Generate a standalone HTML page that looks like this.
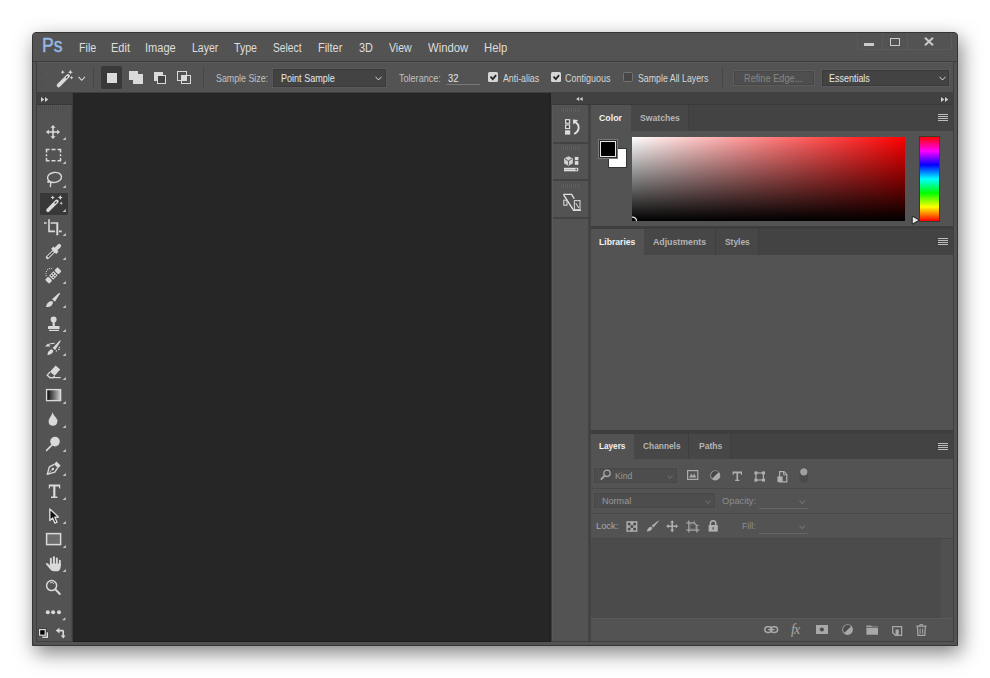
<!DOCTYPE html>
<html><head><meta charset="utf-8">
<style>
*{margin:0;padding:0;box-sizing:border-box}
html,body{width:990px;height:678px;overflow:hidden;background:#fff}
body{position:relative;font-family:"Liberation Sans",sans-serif}
.a{position:absolute}
.t{position:absolute;white-space:nowrap;line-height:1;transform-origin:0 0}
svg.i{position:absolute;overflow:visible}
.ic{fill:#d9d9d9}
.st{fill:none;stroke:#d9d9d9}
</style></head><body>
<div class="a" style="left:32px;top:32px;width:926px;height:614px;background:#535353;border:1px solid #353535;border-radius:4px 4px 0 0;box-shadow:3px 7px 20px rgba(0,0,0,.5)"></div>

<!-- menu bar -->
<div class="a" style="left:33px;top:33px;width:924px;height:28px;background:#535353"></div>
<div class="a" style="left:33px;top:61px;width:924px;height:1px;background:#3d3d3d"></div>
<div class="t" style="left:42.2px;top:35.6px;font-size:19.5px;font-weight:normal;color:#95b8e6;-webkit-text-stroke:0.45px #95b8e6;transform:scaleX(.9)">Ps</div>
<!-- window buttons -->
<div class="a" style="left:857px;top:33px;width:95px;height:17px;border:1px solid #5a5a5a;border-top:none;border-radius:0 0 3px 3px"></div>
<div class="a" style="left:882px;top:33px;width:1px;height:16px;background:#5a5a5a"></div>
<div class="a" style="left:907px;top:33px;width:1px;height:16px;background:#5a5a5a"></div>
<div class="a" style="left:864px;top:43.2px;width:10px;height:2.6px;background:#cacaca"></div>
<div class="a" style="left:890px;top:38.2px;width:10px;height:7.8px;border:1.6px solid #cacaca"></div>
<svg class="i" style="left:924px;top:37px" width="10" height="9"><path d="M1 0.8L9 8.2M9 0.8L1 8.2" stroke="#cacaca" stroke-width="2"/></svg>

<!-- options bar -->
<div class="a" style="left:37px;top:62px;width:916px;height:31px;background:#535353;border-top:1px solid #5b5b5b;border-bottom:1px solid #3f3f3f"></div>
<!-- grip -->
<div class="a" style="left:40px;top:68px;width:3px;height:19px;background:repeating-linear-gradient(#4d4d4d 0 1px,#575757 1px 2px)"></div>
<!-- wand -->
<svg class="i" style="left:56px;top:70px" width="18" height="18"><path d="M2.6 15.4L12 6" stroke="#d9d9d9" stroke-width="3.8" stroke-linecap="round"/><path d="M10.2 7.8L11.4 6.6" stroke="#444" stroke-width="1.2" stroke-linecap="round"/><path fill="#d9d9d9" d="M6.7 0.10000000000000009L7.37 1.53L8.8 2.2L7.37 2.87L6.7 4.300000000000001L6.03 2.87L4.6 2.2L6.03 1.53Z"/><path fill="#d9d9d9" d="M14.4 -0.19999999999999973L15.17 1.43L16.8 2.2L15.17 2.97L14.4 4.6L13.63 2.97L12.0 2.2L13.63 1.43Z"/><path fill="#d9d9d9" d="M15.6 5.9L16.18 7.12L17.4 7.7L16.18 8.28L15.6 9.5L15.02 8.28L13.799999999999999 7.7L15.02 7.12Z"/></svg>
<svg class="i" style="left:78px;top:76px" width="8" height="6"><path d="M0.5 0.8L3.7 4.3L6.9 0.8" class="st" stroke-width="1.1"/></svg>
<div class="a" style="left:93px;top:67px;width:1px;height:21px;background:#474747"></div>
<!-- selection mode buttons -->
<div class="a" style="left:101px;top:66px;width:21px;height:23px;background:#393939;border-radius:2px"></div>
<div class="a" style="left:107px;top:73px;width:10px;height:10px;background:#dadada"></div>
<div class="a" style="left:129px;top:71px;width:9px;height:9px;background:#dadada"></div>
<div class="a" style="left:133px;top:74px;width:9.5px;height:9.5px;background:#dadada"></div>
<div class="a" style="left:154px;top:71.5px;width:9px;height:9px;background:#dadada"></div>
<div class="a" style="left:157px;top:74.5px;width:9px;height:9px;background:#444;border:1.5px solid #dadada"></div>
<div class="a" style="left:177px;top:71px;width:9.5px;height:9.5px;border:1.5px solid #dadada"></div>
<div class="a" style="left:181px;top:74.5px;width:9.5px;height:9.5px;border:1.5px solid #dadada"></div>
<div class="a" style="left:181.5px;top:75px;width:4.5px;height:5px;background:#dadada"></div>
<div class="a" style="left:203px;top:67px;width:1px;height:21px;background:#474747"></div>
<!-- sample size dropdown -->
<div class="a" style="left:273px;top:69px;width:113px;height:18px;background:#434343;border:1px solid #3a3a3a;box-shadow:0 0 0 1px #5a5a5a"></div>
<svg class="i" style="left:375px;top:76px" width="8" height="6"><path d="M0.5 0.8L3.5 4L6.5 0.8" class="st" stroke-width="1"/></svg>
<!-- tolerance underline -->
<div class="a" style="left:446px;top:84px;width:34px;height:1px;background:#787878"></div>
<!-- checkboxes -->
<div class="a" style="left:487.6px;top:72px;width:10.3px;height:10.2px;background:#d6d6d6;border-radius:1.5px"></div>
<svg class="i" style="left:487.6px;top:72px" width="11" height="11"><path d="M2.5 4.7L4.8 7.1L8.1 3.2" fill="none" stroke="#262626" stroke-width="1.8"/></svg>
<div class="a" style="left:550.8px;top:72px;width:10.3px;height:10.2px;background:#d6d6d6;border-radius:1.5px"></div>
<svg class="i" style="left:550.8px;top:72px" width="11" height="11"><path d="M2.5 4.7L4.8 7.1L8.1 3.2" fill="none" stroke="#262626" stroke-width="1.8"/></svg>
<div class="a" style="left:622.8px;top:72px;width:10.2px;height:10.1px;border:1px solid #727272;border-radius:1.5px;background:#464646"></div>
<div class="a" style="left:722px;top:67px;width:1px;height:21px;background:#474747"></div>
<!-- refine edge -->
<div class="a" style="left:733px;top:70px;width:82px;height:16px;background:#4e4e4e;border:1px solid #5c5c5c;box-shadow:inset 0 0 0 1px #474747"></div>
<!-- essentials -->
<div class="a" style="left:822px;top:70px;width:127px;height:16px;background:#434343;border:1px solid #3a3a3a;box-shadow:0 0 0 1px #5a5a5a"></div>
<svg class="i" style="left:938.5px;top:76px" width="8" height="6"><path d="M0.5 0.8L3.5 4L6.5 0.8" class="st" stroke-width="1"/></svg>

<!-- dock headers -->
<div class="a" style="left:37px;top:93px;width:35px;height:12px;background:#414141;border-bottom:1px solid #393939"></div>
<svg class="i" style="left:40.5px;top:96.8px" width="8" height="5"><path d="M0 0L3.3 2.5L0 5ZM4 0L7.3 2.5L4 5Z" fill="#cfcfcf"/></svg>
<div class="a" style="left:551px;top:93px;width:402px;height:12px;background:#414141;border-bottom:1px solid #393939"></div>
<svg class="i" style="left:576px;top:97.3px" width="7" height="4"><path d="M3.2 0L0 2L3.2 4ZM6.7 0L3.5 2L6.7 4Z" fill="#cfcfcf"/></svg>
<svg class="i" style="left:941px;top:96.8px" width="8" height="5"><path d="M0 0L3.3 2.5L0 5ZM4 0L7.3 2.5L4 5Z" fill="#cfcfcf"/></svg>

<!-- canvas -->
<div class="a" style="left:73px;top:93px;width:476px;height:549px;background:#262626"></div>
<div class="a" style="left:549px;top:93px;width:2px;height:549px;background:#232323"></div>

<!-- toolbar -->
<div class="a" style="left:37px;top:105px;width:35px;height:537px;background:#535353"></div>
<div class="a" style="left:40px;top:105.5px;width:23px;height:6px;background:repeating-linear-gradient(90deg,#4e4e4e 0 1px,#565656 1px 2px)"></div>
<div class="a" style="left:40px;top:193px;width:28px;height:21.5px;background:#383838;border-radius:1px"></div>
<div class="a" style="left:71px;top:105px;width:1px;height:536px;background:#4c4c4c"></div>
<div class="a" style="left:72px;top:93px;width:1px;height:548px;background:#3b3b3b"></div>
<svg class="i" style="left:43px;top:120.0px" width="26" height="22"><path fill="#d9d9d9" d="M10 5L12.6 7.8L10.8 7.8L10.8 11.2L14.2 11.2L14.2 9.4L17 12L14.2 14.6L14.2 12.8L10.8 12.8L10.8 16.2L12.6 16.2L10 19L7.4 16.2L9.2 16.2L9.2 12.8L5.8 12.8L5.8 14.6L3 12L5.8 9.4L5.8 11.2L9.2 11.2L9.2 7.8L7.4 7.8Z"/><path d="M19.6 19.9L22.8 19.9L22.8 16.9Z" fill="#c8c8c8"/></svg>
<svg class="i" style="left:43px;top:144.0px" width="26" height="22"><path fill="none" stroke="#d9d9d9" stroke-width="1.5" d="M3.5 8.5V5.5H6.5M8.5 5.5H12.5M14.5 5.5H17.5V8.5M17.5 10.3V12.3M17.5 14V16.8H14.5M12.5 16.8H8.5M6.5 16.8H3.5V14M3.5 12.3V10.3"/><path d="M19.6 19.9L22.8 19.9L22.8 16.9Z" fill="#c8c8c8"/></svg>
<svg class="i" style="left:43px;top:168.0px" width="26" height="22"><ellipse cx="11.5" cy="9.4" rx="7" ry="5" transform="rotate(-8 11.5 9.4)" fill="none" stroke="#d9d9d9" stroke-width="1.4"/>
<path d="M5 13.2Q8.5 14.2 7.6 16.5Q7 18 7.8 19" fill="none" stroke="#d9d9d9" stroke-width="1.4"/><circle cx="5.2" cy="13.8" r="1.1" fill="#d9d9d9"/><path d="M19.6 19.9L22.8 19.9L22.8 16.9Z" fill="#c8c8c8"/></svg>
<svg class="i" style="left:43px;top:192.0px" width="26" height="22"><path d="M5 18.2L13.8 9.4" stroke="#d9d9d9" stroke-width="3.7" stroke-linecap="round"/><path d="M12 11.2L13.2 10" stroke="#3a3a3a" stroke-width="1.2" stroke-linecap="round"/><path fill="#d9d9d9" d="M9.7 3.4L10.37 4.83L11.799999999999999 5.5L10.37 6.17L9.7 7.6L9.03 6.17L7.6 5.5L9.03 4.83Z"/><path fill="#d9d9d9" d="M17.3 3.1L18.07 4.73L19.7 5.5L18.07 6.27L17.3 7.9L16.53 6.27L14.9 5.5L16.53 4.73Z"/><path fill="#d9d9d9" d="M18.2 9.5L18.74 10.66L19.9 11.2L18.74 11.74L18.2 12.899999999999999L17.66 11.74L16.5 11.2L17.66 10.66Z"/><path d="M19.6 19.9L22.8 19.9L22.8 16.9Z" fill="#c8c8c8"/></svg>
<svg class="i" style="left:43px;top:216.0px" width="26" height="22"><path fill="#d9d9d9" d="M5.2 3.2H6.8V14.4H12V16.2H5.2ZM1 6.2H3.6V7.8H1ZM7.6 6.2H15.3V19.2H13.3V7.8H7.6ZM16 14.6H18.7V16.2H16Z"/><path d="M19.6 19.9L22.8 19.9L22.8 16.9Z" fill="#c8c8c8"/></svg>
<svg class="i" style="left:43px;top:240.0px" width="26" height="22"><path d="M4.6 17.4L10.6 11.4" fill="none" stroke="#d9d9d9" stroke-width="3.4" stroke-linecap="round"/><path d="M5.2 16.8L10 12" stroke="#3a3a3a" stroke-width="1.3" stroke-linecap="round"/>
<path fill="#d9d9d9" d="M15.5 11.6L13.2 13.9L8.1 8.8L10.4 6.5Z"/><path d="M13.4 8.6L16.2 5.8" stroke="#d9d9d9" stroke-width="3.8" stroke-linecap="round"/><path d="M19.6 19.9L22.8 19.9L22.8 16.9Z" fill="#c8c8c8"/></svg>
<svg class="i" style="left:43px;top:264.0px" width="26" height="22"><g transform="rotate(-45 10.3 11.5)"><rect x="1.4" y="8.6" width="4.6" height="5.8" rx="1.2" fill="#d9d9d9"/><rect x="14.6" y="8.6" width="4.6" height="5.8" rx="1.2" fill="#d9d9d9"/><rect x="7.2" y="8.6" width="6.2" height="5.8" fill="#d9d9d9"/>
</g><circle cx="10.3" cy="9.7" r="0.8" fill="#333"/><circle cx="10.3" cy="13.3" r="0.8" fill="#333"/><circle cx="8.5" cy="11.5" r="0.8" fill="#333"/><circle cx="12.1" cy="11.5" r="0.8" fill="#333"/>
<path d="M3.2 11.6A5.6 5.6 0 0 1 8.6 4.2" fill="none" stroke="#d9d9d9" stroke-width="1.1" stroke-dasharray="0.1 2" stroke-linecap="round"/><path d="M19.6 19.9L22.8 19.9L22.8 16.9Z" fill="#c8c8c8"/></svg>
<svg class="i" style="left:43px;top:288.0px" width="26" height="22"><path fill="#d9d9d9" d="M16.2 4.7L17.1 5.5L11.9 13.7L9 11.3Z"/><path fill="#d9d9d9" d="M3 18.9Q3.4 15 6.6 13.4Q8.8 12.6 9.8 13.8Q10.4 15.6 8.6 17.4Q6.6 19.2 3 18.9Z"/><path d="M19.6 19.9L22.8 19.9L22.8 16.9Z" fill="#c8c8c8"/></svg>
<svg class="i" style="left:43px;top:312.0px" width="26" height="22"><circle cx="10.6" cy="7.6" r="3" fill="#d9d9d9"/><rect x="9.6" y="9" width="2.2" height="5" fill="#d9d9d9"/><rect x="5" y="14" width="11.5" height="3" rx="0.6" fill="#d9d9d9"/><rect x="6" y="17.8" width="10" height="1.2" fill="#d9d9d9"/><path d="M19.6 19.9L22.8 19.9L22.8 16.9Z" fill="#c8c8c8"/></svg>
<svg class="i" style="left:43px;top:336.0px" width="26" height="22"><path fill="#d9d9d9" d="M2 10.6L5 7.4L7.4 10.6Z"/><path d="M5.5 8.6Q7 7.3 11.6 7.3" fill="none" stroke="#d9d9d9" stroke-width="1"/>
<path fill="#d9d9d9" d="M17 4.2L17.8 5L12.2 13.9L9.6 11.9Z"/><path fill="#d9d9d9" d="M4.4 19Q5 15 7.6 13.6Q9.6 13 10.2 14.4Q10.6 16.4 8.4 17.8Q6.6 19 4 19.1Z"/>
<circle cx="16.4" cy="11.4" r="0.7" fill="#d9d9d9"/><circle cx="15.6" cy="13.4" r="0.7" fill="#d9d9d9"/><circle cx="13.4" cy="15" r="0.7" fill="#d9d9d9"/><circle cx="16.6" cy="13.2" r="0.5" fill="#d9d9d9"/><path d="M19.6 19.9L22.8 19.9L22.8 16.9Z" fill="#c8c8c8"/></svg>
<svg class="i" style="left:43px;top:360.0px" width="26" height="22"><path fill="#d9d9d9" d="M12.6 5.6L17.2 9.6L11.6 15.8L7 11.8Z"/><path d="M7 11.8L4.2 15.2L6.8 17.6H10.2L11.6 15.8" fill="none" stroke="#d9d9d9" stroke-width="1.3"/><path d="M6.4 17.6H17.6" stroke="#d9d9d9" stroke-width="1.2"/><path d="M19.6 19.9L22.8 19.9L22.8 16.9Z" fill="#c8c8c8"/></svg>
<svg class="i" style="left:43px;top:384.0px" width="26" height="22"><defs><linearGradient id="gr" x1="0" x2="1"><stop offset="0" stop-color="#000"/><stop offset="1" stop-color="#cfcfcf"/></linearGradient></defs>
<rect x="3.6" y="5.6" width="14" height="11" fill="url(#gr)" stroke="#d9d9d9" stroke-width="1.4"/><path d="M19.6 19.9L22.8 19.9L22.8 16.9Z" fill="#c8c8c8"/></svg>
<svg class="i" style="left:43px;top:408.0px" width="26" height="22"><path fill="#d9d9d9" d="M9.5 4.2Q10.4 7 12.8 9.6Q14.6 11.6 14.4 13.6Q14 17.8 10 17.8Q5.8 17.8 5.6 13.6Q5.5 11.4 7 9.6Q8.8 7.2 9.5 4.2Z"/><path d="M19.6 19.9L22.8 19.9L22.8 16.9Z" fill="#c8c8c8"/></svg>
<svg class="i" style="left:43px;top:432.0px" width="26" height="22"><circle cx="12" cy="9.6" r="4.8" fill="#d9d9d9"/><path d="M3.6 18.4L8.6 13.4" stroke="#d9d9d9" stroke-width="1.5" stroke-linecap="round"/><path d="M19.6 19.9L22.8 19.9L22.8 16.9Z" fill="#c8c8c8"/></svg>
<svg class="i" style="left:43px;top:456.0px" width="26" height="22"><path fill="#d9d9d9" d="M13.4 5.6L17.6 9.6L15.2 12.2L11 8.2Z"/><path d="M11.2 8.4L6.4 10.8L4.2 18.4L11.8 16.2L14.6 11.8" fill="none" stroke="#d9d9d9" stroke-width="1.3" stroke-linejoin="round"/>
<circle cx="9.9" cy="13" r="1.2" fill="#d9d9d9"/><path d="M4.6 18L9.4 13.4" stroke="#d9d9d9" stroke-width="0.9"/><path d="M19.6 19.9L22.8 19.9L22.8 16.9Z" fill="#c8c8c8"/></svg>
<svg class="i" style="left:43px;top:480.0px" width="26" height="22"><path fill="#d9d9d9" d="M5.8 4.6H17.2V8.4H16.2L15.8 6.4H12.4V16.6H14.4V18H8V16.6H10.2V6.4H7L6.8 8.4H5.8Z"/><path d="M19.6 19.9L22.8 19.9L22.8 16.9Z" fill="#c8c8c8"/></svg>
<svg class="i" style="left:43px;top:504.0px" width="26" height="22"><path d="M6.8 5L6.8 16.5L9.6 14L12 19.2L14 18.2L11.8 13.2L15.4 13Z" fill="#101010" stroke="#d9d9d9" stroke-width="1.4" stroke-linejoin="round"/><path d="M19.6 19.9L22.8 19.9L22.8 16.9Z" fill="#c8c8c8"/></svg>
<svg class="i" style="left:43px;top:528.0px" width="26" height="22"><rect x="3.6" y="5.6" width="14" height="11" fill="#6c6c6c" stroke="#d9d9d9" stroke-width="1.5"/><path d="M19.6 19.9L22.8 19.9L22.8 16.9Z" fill="#c8c8c8"/></svg>
<svg class="i" style="left:43px;top:552.0px" width="26" height="22"><g fill="#d9d9d9"><rect x="6.9" y="5.8" width="1.9" height="8" rx="0.95"/><rect x="9.9" y="4.2" width="2" height="9" rx="1"/><rect x="12.9" y="5.6" width="1.9" height="8" rx="0.95"/><rect x="15.9" y="7.8" width="1.9" height="6" rx="0.95"/>
<path d="M6.9 11.6H17.8V14Q17.6 18 15 19.2H10.6Q8.6 19 7.2 17.2L3.2 12.4Q2.6 11.4 3.6 11.1Q4.6 10.9 6.9 13.4Z"/></g><path d="M19.6 19.9L22.8 19.9L22.8 16.9Z" fill="#c8c8c8"/></svg>
<svg class="i" style="left:43px;top:576.0px" width="26" height="22"><circle cx="8.6" cy="9.6" r="5" fill="none" stroke="#d9d9d9" stroke-width="1.5"/><path d="M7 6.9A3 3 0 0 1 11 7.8" fill="none" stroke="#d9d9d9" stroke-width="0.9"/><path d="M12.4 13.4L16.8 18" stroke="#d9d9d9" stroke-width="2" stroke-linecap="round"/></svg>
<svg class="i" style="left:43px;top:600.0px" width="26" height="22"><circle cx="4.8" cy="12.3" r="2" fill="#d9d9d9"/><circle cx="10.1" cy="12.3" r="2" fill="#d9d9d9"/><circle cx="16" cy="12.3" r="2" fill="#d9d9d9"/><path d="M19 20.2L22.4 20.2L22.4 17.2Z" fill="#c8c8c8"/></svg>
<svg class="i" style="left:36px;top:604px" width="34" height="38">
<rect x="5.8" y="27.9" width="6.8" height="6.4" fill="#e2e2e2" stroke="#3a3a3a" stroke-width="0.8"/>
<rect x="3.6" y="25.6" width="5.6" height="5.6" fill="#000" stroke="#3a3a3a" stroke-width="2.6"/>
<rect x="3.6" y="25.6" width="5.6" height="5.6" fill="#000" stroke="#dcdcdc" stroke-width="1.2"/>
<path fill="#d9d9d9" d="M19.8 26.6L23.4 23.8V25.8H26.6Q28 25.8 28 27.2V31.4H29.6L27.2 34.4L24.8 31.4H26.4V27.6Q26.4 27.4 26.2 27.4H23.4V29.4Z"/>
</svg>

<!-- dock column -->
<div class="a" style="left:551px;top:105px;width:37px;height:537px;background:#535353"></div>
<div class="a" style="left:551px;top:142px;width:37px;height:2px;background:#434343"></div>
<div class="a" style="left:551px;top:179px;width:37px;height:2px;background:#434343"></div>
<div class="a" style="left:551px;top:217px;width:37px;height:2px;background:#434343"></div>
<div class="a" style="left:588px;top:105px;width:3px;height:537px;background:#434343"></div>
<div class="a" style="left:551px;top:105px;width:1px;height:536px;background:#3d3d3d"></div>
<div class="a" style="left:552px;top:105px;width:1px;height:536px;background:#595959"></div>
<!--DOCK-->

<!-- right panels -->
<div class="a" style="left:591px;top:105px;width:362px;height:26px;background:#434343"></div>
<div class="a" style="left:591px;top:105px;width:40px;height:26px;background:#535353"></div>
<div class="a" style="left:631px;top:105px;width:58px;height:26px;background:#474747;border-right:1px solid #3e3e3e"></div>
<div class="a" style="left:591px;top:131px;width:362px;height:95px;background:#535353"></div>
<div class="a" style="left:591px;top:226px;width:362px;height:3px;background:#3e3e3e"></div>
<div class="a" style="left:591px;top:229px;width:362px;height:26px;background:#434343"></div>
<div class="a" style="left:591px;top:229px;width:53px;height:26px;background:#535353"></div>
<div class="a" style="left:644px;top:229px;width:72px;height:26px;background:#474747;border-right:1px solid #3e3e3e"></div>
<div class="a" style="left:716px;top:229px;width:43px;height:26px;background:#474747;border-right:1px solid #3e3e3e"></div>
<div class="a" style="left:591px;top:255px;width:362px;height:175px;background:#535353"></div>
<div class="a" style="left:591px;top:430px;width:362px;height:4px;background:#3e3e3e"></div>
<div class="a" style="left:591px;top:434px;width:362px;height:25px;background:#434343"></div>
<div class="a" style="left:591px;top:434px;width:43px;height:25px;background:#535353"></div>
<div class="a" style="left:634px;top:434px;width:55px;height:25px;background:#474747;border-right:1px solid #3e3e3e"></div>
<div class="a" style="left:689px;top:434px;width:42px;height:25px;background:#474747;border-right:1px solid #3e3e3e"></div>
<div class="a" style="left:591px;top:459px;width:362px;height:80px;background:#535353"></div>
<div class="a" style="left:591px;top:539px;width:362px;height:80px;background:#4b4b4b"></div>
<div class="a" style="left:591px;top:619px;width:362px;height:23px;background:#535353"></div>
<!-- dock grips -->
<div class="a" style="left:560px;top:108px;width:21px;height:4px;background:repeating-linear-gradient(90deg,#505050 0 1px,#5d5d5d 1px 2px)"></div>
<div class="a" style="left:560px;top:146px;width:21px;height:4px;background:repeating-linear-gradient(90deg,#505050 0 1px,#5d5d5d 1px 2px)"></div>
<div class="a" style="left:560px;top:184px;width:21px;height:4px;background:repeating-linear-gradient(90deg,#505050 0 1px,#5d5d5d 1px 2px)"></div>
<!-- history icon -->
<svg class="i" style="left:560px;top:116px" width="24" height="22">
 <rect x="5.6" y="3.7" width="4" height="3.5" fill="none" stroke="#dcdcdc" stroke-width="1.2"/><rect x="6.9" y="4.8" width="1.4" height="1.3" fill="#2a2a2a"/>
 <rect x="5.6" y="9" width="4" height="3.5" fill="none" stroke="#dcdcdc" stroke-width="1.2"/><rect x="6.9" y="10.1" width="1.4" height="1.3" fill="#2a2a2a"/>
 <rect x="5" y="14.3" width="5.2" height="4.3" fill="#dcdcdc"/>
 <path d="M14.6 5.6Q19.4 8.4 18.6 12.6Q18 16 14.2 18" fill="none" stroke="#e0e0e0" stroke-width="1.9"/>
 <path d="M12.8 3.6L18.2 4L13.4 8.6Z" fill="#e0e0e0"/>
</svg>
<!-- 3d icon -->
<svg class="i" style="left:560px;top:152px" width="24" height="22">
 <path d="M8.5 4.2L12.9 6.5V11.6L8.5 13.8L4.1 11.6V6.5Z" fill="#cfcfcf"/>
 <path d="M5 6.9L8.5 8.9L12 6.9M8.5 8.9V13" fill="none" stroke="#555" stroke-width="0.9"/>
 <rect x="14.8" y="4.9" width="3.6" height="3.3" fill="#dcdcdc"/><rect x="14.8" y="9.1" width="3.6" height="3.7" fill="#dcdcdc"/>
 <rect x="4" y="15.8" width="14.2" height="3.5" fill="#dcdcdc"/><rect x="5.2" y="17" width="9.5" height="0.8" fill="#aaa"/><circle cx="16.2" cy="17.5" r="0.9" fill="#555"/>
</svg>
<!-- comps icon -->
<svg class="i" style="left:560px;top:191px" width="24" height="22">
 <path d="M3.4 3.4H11.6L14.2 7.6" fill="none" stroke="#e0e0e0" stroke-width="1.4"/>
 <path d="M3.6 3.8L13.6 19.4H21" fill="none" stroke="#e0e0e0" stroke-width="1.4"/>
 <rect x="3.8" y="9.2" width="3.2" height="5" fill="none" stroke="#d0d0d0" stroke-width="1.1"/>
 <rect x="14.4" y="9.6" width="5.6" height="9" fill="none" stroke="#d0d0d0" stroke-width="1.1"/>
 <path d="M15.8 12.2L18.8 17" stroke="#d0d0d0" stroke-width="1.1"/>
</svg>
<!-- hamburgers -->
<svg class="i" style="left:938px;top:114px" width="11" height="8"><path d="M0 0.5H10M0 2.5H10M0 4.5H10M0 6.5H10" stroke="#bdbdbd" stroke-width="1"/></svg>
<svg class="i" style="left:938px;top:238px" width="11" height="8"><path d="M0 0.5H10M0 2.5H10M0 4.5H10M0 6.5H10" stroke="#bdbdbd" stroke-width="1"/></svg>
<svg class="i" style="left:938px;top:442.5px" width="11" height="8"><path d="M0 0.5H10M0 2.5H10M0 4.5H10M0 6.5H10" stroke="#bdbdbd" stroke-width="1"/></svg>

<!-- color panel -->
<div class="a" style="left:608px;top:148px;width:19px;height:20px;background:#fff;border:1px solid #333"></div>
<div class="a" style="left:598px;top:139px;width:20px;height:20px;background:#000;border:1px solid #777;box-shadow:inset 0 0 0 1px #2e2e2e,inset 0 0 0 2px #e6e6e6"></div>
<div class="a" style="left:632px;top:137px;width:273px;height:84px;background:linear-gradient(to bottom,rgba(0,0,0,0),#000),linear-gradient(to right,#fff,#f00)"></div>
<svg class="i" style="left:627px;top:216px" width="12" height="10"><path d="M5 1.2A4 4 0 0 1 9.6 5" fill="none" stroke="#e6e6e6" stroke-width="1.3"/></svg>
<div class="a" style="left:919px;top:136px;width:21px;height:86px;border:1px solid #3a3a3a;background:linear-gradient(to bottom,#f00 0%,#f0f 16.7%,#00f 33.3%,#0ff 50%,#0f0 66.7%,#ff0 83.3%,#f00 100%)"></div>
<svg class="i" style="left:910px;top:215px" width="11" height="11"><path d="M2.2 2.2Q2.2 1.2 3.2 1.6L8.4 4.6Q9.2 5.2 8.4 5.8L3.2 8.8Q2.2 9.2 2.2 8.2Z" fill="#e8e8e8" stroke="#2a2a2a" stroke-width="1.1"/></svg>

<!-- layers panel: kind row -->
<div class="a" style="left:594px;top:468px;width:83px;height:15px;background:#4d4d4d;border:1px solid #474747;box-shadow:0 0 0 1px #555"></div>
<svg class="i" style="left:600px;top:468.8px" width="12" height="12"><circle cx="7" cy="4.3" r="3.2" fill="none" stroke="#a6a6a6" stroke-width="1.3"/><path d="M4.8 6.6L1.4 10" stroke="#a6a6a6" stroke-width="1.8" stroke-linecap="round"/></svg>
<svg class="i" style="left:667px;top:475.2px" width="7" height="5"><path d="M0.5 0.5L3 3.5L5.5 0.5" fill="none" stroke="#6c6c6c" stroke-width="1.1"/></svg>
<svg class="i" style="left:686.5px;top:470px" width="12" height="10"><rect x="0.6" y="0.6" width="10.2" height="8.8" fill="none" stroke="#ababab" stroke-width="1.2"/><path d="M2.2 7.6L4.2 3.6L5.6 6L7.2 3.4L9.2 7.6Z" fill="#ababab"/></svg>
<svg class="i" style="left:709.5px;top:470px" width="11" height="11"><circle cx="5.3" cy="5.5" r="5" fill="#ababab"/><path d="M8.6 2.3A4 4 0 0 0 2.2 8.4Z" fill="#454545"/></svg>
<svg class="i" style="left:732px;top:470.5px" width="11" height="11"><path fill="#b0b0b0" d="M0.6 0.6H10V3.8H9L8.6 2.2H6.1V8.8H7.4V10H3.2V8.8H4.5V2.2H2L1.6 3.8H0.6Z"/></svg>
<svg class="i" style="left:753.5px;top:470.5px" width="12" height="11"><rect x="2" y="2" width="7.4" height="7" fill="none" stroke="#b0b0b0" stroke-width="1.2"/><rect x="0.4" y="0.4" width="3" height="3" fill="#b0b0b0"/><rect x="8" y="0.4" width="3" height="3" fill="#b0b0b0"/><rect x="0.4" y="7.6" width="3" height="3" fill="#b0b0b0"/><rect x="8" y="7.6" width="3" height="3" fill="#b0b0b0"/></svg>
<svg class="i" style="left:776.5px;top:470.5px" width="11" height="12"><path d="M2.6 0.6H7L9.8 3.4V10.8H2.6Z" fill="none" stroke="#b0b0b0" stroke-width="1.2"/><path d="M6.6 0.8V3.8H9.6" fill="none" stroke="#b0b0b0" stroke-width="1"/><rect x="0.4" y="5.4" width="5.2" height="5.6" fill="#b0b0b0"/></svg>
<svg class="i" style="left:799px;top:467px" width="10" height="16"><rect x="0.6" y="0.4" width="8.4" height="15.4" rx="4.2" fill="#4a4a4a"/><circle cx="4.8" cy="4.8" r="3.6" fill="#a0a0a0"/></svg>
<div class="a" style="left:591px;top:488px;width:362px;height:1px;background:#494949"></div>
<!-- normal row -->
<div class="a" style="left:594px;top:493px;width:121px;height:15px;background:#4d4d4d;border:1px solid #474747;box-shadow:0 0 0 1px #555"></div>
<svg class="i" style="left:705px;top:499.8px" width="7" height="5"><path d="M0.5 0.5L3 3.5L5.5 0.5" fill="none" stroke="#6c6c6c" stroke-width="1.1"/></svg>
<div class="a" style="left:759px;top:508px;width:49px;height:1px;background:#666"></div>
<svg class="i" style="left:799px;top:499.5px" width="7" height="5"><path d="M0.5 0.5L3.2 3.6L5.9 0.5" fill="none" stroke="#6e6e6e" stroke-width="1.2"/></svg>
<div class="a" style="left:591px;top:513px;width:362px;height:1px;background:#494949"></div>
<!-- lock row -->
<svg class="i" style="left:625.5px;top:520.5px" width="12" height="11"><rect x="0.4" y="0.2" width="11" height="10.6" fill="#acacac"/><g fill="#4a4a4a"><circle cx="3.2" cy="3" r="1.5"/><circle cx="8.6" cy="3" r="1.5"/><circle cx="5.9" cy="5.5" r="1.5"/><circle cx="3.2" cy="8" r="1.5"/><circle cx="8.6" cy="8" r="1.5"/></g></svg>
<svg class="i" style="left:645.5px;top:520px" width="14" height="12"><path fill="#b0b0b0" d="M12.4 0.4L12.9 0.9L7.4 7.4L5.6 5.8Z"/><path fill="#b0b0b0" d="M0.8 11.6Q1.4 8.4 3.6 7Q5.2 6.4 6.2 7.6Q6.6 9.2 4.8 10.4Q3.2 11.4 0.4 11.7Z"/></svg>
<svg class="i" style="left:666px;top:519.5px" width="13" height="13"><path fill="#b0b0b0" d="M6.2 0.2L8.3 2.6H7V5.4H9.8V4.1L12.2 6.2L9.8 8.3V7H7V9.8H8.3L6.2 12.2L4.1 9.8H5.4V7H2.6V8.3L0.2 6.2L2.6 4.1V5.4H5.4V2.6H4.1Z"/></svg>
<svg class="i" style="left:686px;top:519.5px" width="14" height="13"><path d="M2.8 0.4V12.6M0.4 10.2H13.4M0.4 2.8H8.2L10.8 5.4V12.6" fill="none" stroke="#a8a8a8" stroke-width="1.2"/><path d="M8.2 0.6V2.8M10.8 5.4H13" stroke="#a8a8a8" stroke-width="0.8"/><path d="M4 4H7.6L9.6 6V9H4Z" fill="none" stroke="#8a8a8a" stroke-width="0.6"/></svg>
<svg class="i" style="left:708px;top:520px" width="11" height="12"><path d="M2.4 5V3.6Q2.4 0.8 5.1 0.8Q7.8 0.8 7.8 3.6V5" fill="none" stroke="#b0b0b0" stroke-width="1.5"/><rect x="0.6" y="5" width="9.2" height="6.6" fill="#b0b0b0"/><rect x="4.5" y="7.2" width="1.4" height="2.4" fill="#555"/></svg>
<div class="a" style="left:759px;top:533px;width:49px;height:1px;background:#666"></div>
<svg class="i" style="left:799px;top:524.5px" width="7" height="5"><path d="M0.5 0.5L3.2 3.6L5.9 0.5" fill="none" stroke="#6e6e6e" stroke-width="1.2"/></svg>
<div class="a" style="left:591px;top:538px;width:362px;height:1px;background:#474747"></div>
<!-- list scrollbar strip -->
<div class="a" style="left:941px;top:539px;width:12px;height:79px;background:#505050"></div>
<div class="a" style="left:591px;top:618px;width:362px;height:1px;background:#5a5a5a"></div>
<!-- footer icons -->
<svg class="i" style="left:764px;top:626px" width="16" height="8"><rect x="0.8" y="0.8" width="7" height="5.6" rx="2.8" fill="none" stroke="#a8a8a8" stroke-width="1.5"/><rect x="6.6" y="0.8" width="7" height="5.6" rx="2.8" fill="none" stroke="#a8a8a8" stroke-width="1.5"/><path d="M4 3.6H10.6" stroke="#a8a8a8" stroke-width="1.3"/></svg>
<div class="t" style="left:791px;top:622.5px;font-size:14px;font-style:italic;font-family:'Liberation Serif',serif;color:#a8a8a8;letter-spacing:-1px">fx</div>
<svg class="i" style="left:815.5px;top:625px" width="12" height="10"><rect x="0" y="0" width="12" height="9" fill="#a8a8a8"/><circle cx="5.9" cy="4.5" r="2.1" fill="#4c4c4c"/></svg>
<svg class="i" style="left:841.5px;top:624px" width="12" height="12"><circle cx="5.6" cy="5.6" r="5.3" fill="#a8a8a8"/><path d="M9 2.4A4.3 4.3 0 0 0 2.4 8.8Z" fill="#4a4a4a"/></svg>
<svg class="i" style="left:865.5px;top:624.5px" width="13" height="10"><path d="M0.4 0.4H5L6 1.6H12V9.8H0.4Z" fill="#a8a8a8"/><path d="M0.4 2.4H12" stroke="#535353" stroke-width="0.8"/></svg>
<svg class="i" style="left:891.5px;top:625.5px" width="11" height="10"><path d="M0.7 0.7H9.6V9.4H3.4L0.7 6.7Z" fill="none" stroke="#a8a8a8" stroke-width="1.3"/><path d="M3.6 3.4H6.8V9.4H3.4V6.7H3.6Z" fill="#a8a8a8"/></svg>
<svg class="i" style="left:916px;top:624px" width="11" height="12"><path d="M0.2 2.2H10.6" stroke="#a8a8a8" stroke-width="1.3"/><path d="M3.8 2V0.6H6.8V2" fill="none" stroke="#a8a8a8" stroke-width="1"/><path d="M1.4 2.6L2 11.4H8.8L9.4 2.6" fill="none" stroke="#a8a8a8" stroke-width="1.2"/><path d="M4.1 4.4V9.8M6.7 4.4V9.8" stroke="#a8a8a8" stroke-width="1"/></svg>


<div class="a" style="left:36px;top:62px;width:1px;height:580px;background:#3f3f3f"></div>
<div class="a" style="left:953px;top:62px;width:1px;height:580px;background:#3f3f3f"></div>
<div class="a" style="left:36px;top:641px;width:918px;height:1px;background:#3f3f3f"></div>
<div class="a" style="left:73px;top:641px;width:478px;height:1px;background:#1f1f1f"></div>
<div class="t" style="left:78.81px;top:42.10px;font-size:12px;font-weight:400;color:#dedede;transform:scaleX(0.8944)">File</div>
<div class="t" style="left:111.08px;top:42.10px;font-size:12px;font-weight:400;color:#dedede;transform:scaleX(0.9200)">Edit</div>
<div class="t" style="left:145.08px;top:42.10px;font-size:12px;font-weight:400;color:#dedede;transform:scaleX(0.9219)">Image</div>
<div class="t" style="left:191.83px;top:42.10px;font-size:12px;font-weight:400;color:#dedede;transform:scaleX(0.8724)">Layer</div>
<div class="t" style="left:234.00px;top:42.10px;font-size:12px;font-weight:400;color:#dedede;transform:scaleX(0.8846)">Type</div>
<div class="t" style="left:272.84px;top:42.10px;font-size:12px;font-weight:400;color:#dedede;transform:scaleX(0.8576)">Select</div>
<div class="t" style="left:318.39px;top:42.10px;font-size:12px;font-weight:400;color:#dedede;transform:scaleX(0.9115)">Filter</div>
<div class="t" style="left:359.30px;top:42.10px;font-size:12px;font-weight:400;color:#dedede;transform:scaleX(0.9133)">3D</div>
<div class="t" style="left:388.70px;top:42.10px;font-size:12px;font-weight:400;color:#dedede;transform:scaleX(0.8769)">View</div>
<div class="t" style="left:428.30px;top:42.10px;font-size:12px;font-weight:400;color:#dedede;transform:scaleX(0.9419)">Window</div>
<div class="t" style="left:484.06px;top:42.10px;font-size:12px;font-weight:400;color:#dedede;transform:scaleX(0.9417)">Help</div>
<div class="t" style="left:216.10px;top:72.58px;font-size:10.5px;font-weight:400;color:#c2c2c2;transform:scaleX(0.8410)">Sample Size:</div>
<div class="t" style="left:280.54px;top:72.58px;font-size:10.5px;font-weight:400;color:#e6e6e6;transform:scaleX(0.8623)">Point Sample</div>
<div class="t" style="left:398.60px;top:72.58px;font-size:10.5px;font-weight:400;color:#c2c2c2;transform:scaleX(0.8625)">Tolerance:</div>
<div class="t" style="left:448.00px;top:72.58px;font-size:10.5px;font-weight:400;color:#e6e6e6;transform:scaleX(0.8909)">32</div>
<div class="t" style="left:502.70px;top:72.58px;font-size:10.5px;font-weight:400;color:#d6d6d6;transform:scaleX(0.8372)">Anti-alias</div>
<div class="t" style="left:565.40px;top:72.58px;font-size:10.5px;font-weight:400;color:#d6d6d6;transform:scaleX(0.8547)">Contiguous</div>
<div class="t" style="left:637.80px;top:72.58px;font-size:10.5px;font-weight:400;color:#d6d6d6;transform:scaleX(0.8381)">Sample All Layers</div>
<div class="t" style="left:744.12px;top:72.58px;font-size:10.5px;font-weight:400;color:#868686;transform:scaleX(0.8769)">Refine Edge...</div>
<div class="t" style="left:828.85px;top:72.58px;font-size:10.5px;font-weight:400;color:#e6e6e6;transform:scaleX(0.8532)">Essentials</div>
<div class="t" style="left:598.80px;top:112.52px;font-size:9.5px;font-weight:700;color:#f2f2f2;transform:scaleX(0.9240)">Color</div>
<div class="t" style="left:639.50px;top:112.52px;font-size:9.5px;font-weight:700;color:#b4b4b4;transform:scaleX(0.9091)">Swatches</div>
<div class="t" style="left:598.70px;top:236.93px;font-size:9.5px;font-weight:700;color:#f2f2f2;transform:scaleX(0.9075)">Libraries</div>
<div class="t" style="left:652.70px;top:236.93px;font-size:9.5px;font-weight:700;color:#b4b4b4;transform:scaleX(0.9224)">Adjustments</div>
<div class="t" style="left:724.80px;top:236.93px;font-size:9.5px;font-weight:700;color:#b4b4b4;transform:scaleX(0.8857)">Styles</div>
<div class="t" style="left:598.70px;top:440.93px;font-size:9.5px;font-weight:700;color:#f2f2f2;transform:scaleX(0.8613)">Layers</div>
<div class="t" style="left:642.60px;top:440.93px;font-size:9.5px;font-weight:700;color:#b4b4b4;transform:scaleX(0.8791)">Channels</div>
<div class="t" style="left:699.00px;top:440.93px;font-size:9.5px;font-weight:700;color:#b4b4b4;transform:scaleX(0.9000)">Paths</div>
<div class="t" style="left:614.70px;top:470.82px;font-size:9.5px;font-weight:400;color:#9a9a9a;transform:scaleX(0.9105)">Kind</div>
<div class="t" style="left:601.70px;top:496.32px;font-size:9.5px;font-weight:400;color:#9a9a9a;transform:scaleX(0.9533)">Normal</div>
<div class="t" style="left:721.80px;top:496.32px;font-size:9.5px;font-weight:400;color:#8e8e8e;transform:scaleX(0.9765)">Opacity:</div>
<div class="t" style="left:595.80px;top:520.72px;font-size:9.5px;font-weight:400;color:#a8a8a8;transform:scaleX(0.9818)">Lock:</div>
<div class="t" style="left:742.20px;top:520.72px;font-size:9.5px;font-weight:400;color:#8e8e8e;transform:scaleX(0.9214)">Fill:</div>
</body></html>
